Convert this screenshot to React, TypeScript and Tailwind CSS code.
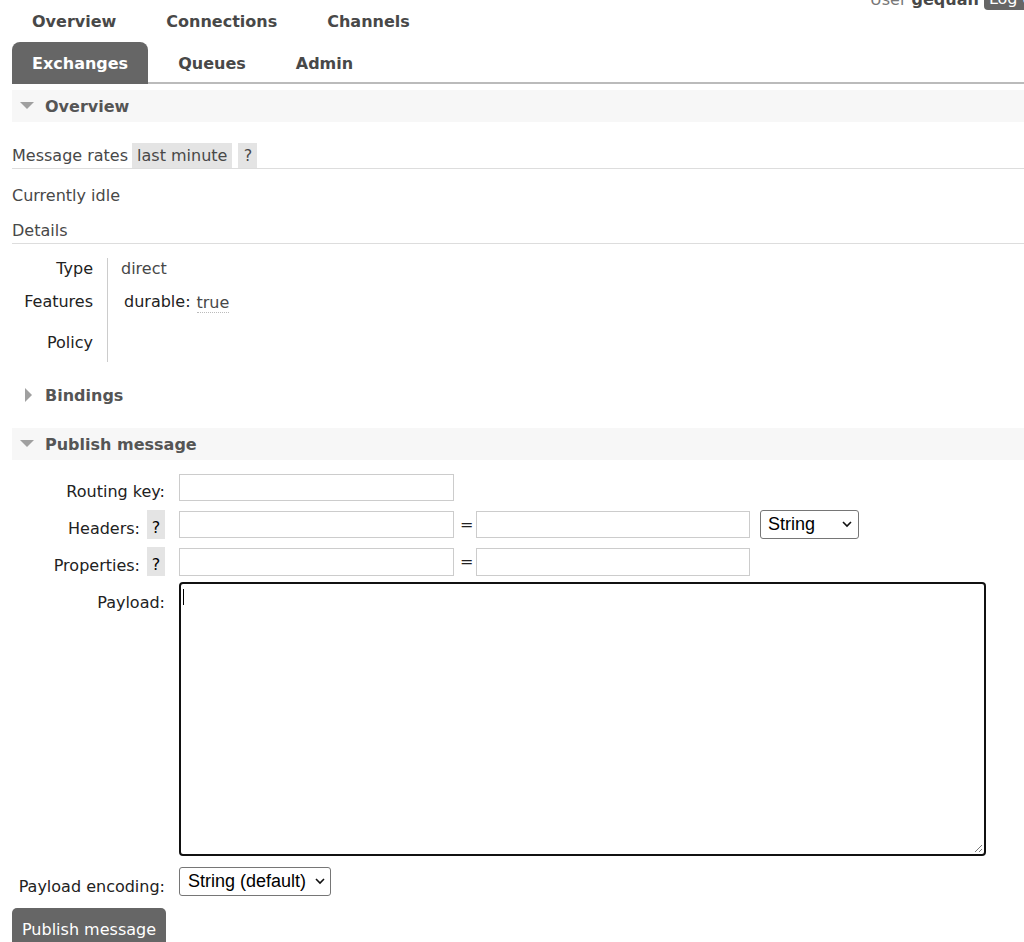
import React from "react";

function DownTri({ ml, mr }: { ml: string; mr: string }) {
  return (
    <svg width="14" height="8" viewBox="0 0 14 8" className={`${ml} ${mr} shrink-0`}>
      <polygon points="0,0 14,0 7,7" fill="#a0a0a0" />
    </svg>
  );
}

function Chevron() {
  return (
    <svg width="10" height="7" viewBox="0 0 10 7" className="shrink-0">
      <polyline points="1,1 5,5 9,1" fill="none" stroke="#111" strokeWidth="1.6" />
    </svg>
  );
}

export default function App() {
  return (
    <div className="relative h-[942px] w-[1024px] overflow-hidden bg-white font-['DejaVu_Sans',sans-serif] text-[16px] leading-[19px] text-[#484848]">
      {/* user info, scrolled partly off the top */}
      <div className="absolute left-[870px] top-[-10px] flex items-start whitespace-nowrap">
        <span className="text-[#777]">User&nbsp;</span>
        <span className="font-bold text-[#484848]">gequan</span>
        <span className="ml-[5px] mt-[-1px] h-[21px] rounded-[4px] bg-[#666] px-[5px] text-white">Log out</span>
      </div>

      {/* nav row 1 */}
      <div className="flex h-[42px] items-center gap-[10px] pl-[12px] font-bold text-[#484848]">
        <span className="px-[20px]">Overview</span>
        <span className="px-[20px]">Connections</span>
        <span className="px-[20px]">Channels</span>
      </div>

      {/* nav row 2 */}
      <div className="ml-[12px] flex h-[42px] items-start gap-[10px] border-b-2 border-[#bbb] font-bold text-[#484848]">
        <span className="flex h-[42px] items-center rounded-t-[8px] bg-[#666] px-[20px] text-white">Exchanges</span>
        <span className="flex h-[42px] items-center px-[20px]">Queues</span>
        <span className="flex h-[42px] items-center px-[20px]">Admin</span>
      </div>

      <div className="pl-[12px]">
        {/* Overview section */}
        <div className="mt-[6px] flex h-[32px] items-center bg-[#f7f7f7] font-bold text-[#555]">
          <DownTri ml="ml-[8px]" mr="mr-[11px]" />
          Overview
        </div>

        <div className="mt-[21px] flex h-[26px] items-start border-b border-[#ddd]">
          <span className="flex h-[25px] items-center">Message rates</span>
          <span className="ml-[4px] flex h-[25px] items-center bg-[#e4e4e4] px-[5px]">last minute</span>
          <span className="ml-[6px] flex h-[25px] w-[19px] items-center justify-center bg-[#e4e4e4]">?</span>
        </div>

        <div className="flex h-[52px] items-center">Currently idle</div>
        <div className="flex h-[23px] items-end border-b border-[#ddd] pb-[3px] leading-[18px]">Details</div>

        {/* facts table */}
        <div className="mt-[14px] flex">
          <div className="w-[96px] border-r border-[#ccc] pr-[14px] text-right text-[#222]">
            <div className="h-[30px] pt-[1px]">Type</div>
            <div className="h-[34px] pt-[4px]">Features</div>
            <div className="h-[40px] pt-[11px]">Policy</div>
          </div>
          <div className="pl-[13px]">
            <div className="h-[30px] pt-[1px]">direct</div>
            <div className="flex h-[34px] items-start pl-[3px] pt-[4px]">
              <span className="text-[#222]">durable:</span>
              <span className="ml-[6px] mt-[2px] border-b border-dotted border-[#bbb] leading-[18px]">true</span>
            </div>
            <div className="h-[40px]" />
          </div>
        </div>

        {/* Bindings */}
        <div className="mt-[17px] flex h-[32px] items-center font-bold text-[#555]">
          <svg width="8" height="14" viewBox="0 0 8 14" className="ml-[13px] mr-[12px] shrink-0">
            <polygon points="0,0 0,14 7,7" fill="#a0a0a0" />
          </svg>
          Bindings
        </div>

        {/* Publish message */}
        <div className="mt-[17px] flex h-[32px] items-center bg-[#f7f7f7] font-bold text-[#555]">
          <DownTri ml="ml-[8px]" mr="mr-[11px]" />
          Publish message
        </div>

        <div className="mt-[14px] flex flex-col text-[#222]">
          <div className="flex items-center">
            <div className="w-[153px] pt-[7px] text-right">Routing key:</div>
            <div className="ml-[14px] h-[27px] w-[275px] border border-[#ccc] bg-white" />
          </div>

          <div className="mt-[9px] flex items-center">
            <div className="flex w-[153px] items-center justify-end gap-[7px]">
              <span className="pt-[7px]">Headers:</span>
              <span className="flex h-[29px] w-[18px] items-center justify-center bg-[#e4e4e4] pt-[5px] text-black">?</span>
            </div>
            <div className="ml-[14px] h-[27px] w-[275px] border border-[#ccc] bg-white" />
            <span className="mx-[6px] w-[10px] text-center">=</span>
            <div className="h-[27px] w-[274px] border border-[#ccc] bg-white" />
            <div className="ml-[10px] flex h-[29px] w-[99px] items-center justify-between rounded-[3px] border border-[#767676] pl-[7px] pr-[6px] font-['Liberation_Sans',Arial,sans-serif] text-[18px] text-black">
              <span>String</span>
              <Chevron />
            </div>
          </div>

          <div className="mt-[8px] flex items-center">
            <div className="flex w-[153px] items-center justify-end gap-[7px]">
              <span className="pt-[7px]">Properties:</span>
              <span className="flex h-[29px] w-[18px] items-center justify-center bg-[#e4e4e4] pt-[5px] text-black">?</span>
            </div>
            <div className="ml-[14px] h-[28px] w-[275px] border border-[#ccc] bg-white" />
            <span className="mx-[6px] w-[10px] text-center">=</span>
            <div className="h-[28px] w-[274px] border border-[#ccc] bg-white" />
          </div>

          <div className="mt-[6px] flex items-start">
            <div className="w-[153px] pt-[11px] text-right">Payload:</div>
            <div className="relative ml-[14px] h-[274px] w-[807px] rounded-[4px] border-2 border-[#111] bg-white">
              <div className="absolute left-[2px] top-[5px] h-[16px] w-px bg-black" />
              <svg width="10" height="10" viewBox="0 0 10 10" className="absolute bottom-[1px] right-[1px]">
                <line x1="9" y1="2" x2="2" y2="9" stroke="#777" strokeWidth="1" />
                <line x1="9" y1="6" x2="6" y2="9" stroke="#777" strokeWidth="1" />
              </svg>
            </div>
          </div>

          <div className="mt-[11px] flex items-center">
            <div className="w-[153px] pt-[9px] text-right">Payload encoding:</div>
            <div className="ml-[14px] flex h-[29px] w-[152px] items-center justify-between rounded-[3px] border border-[#767676] pl-[8px] pr-[5px] font-['Liberation_Sans',Arial,sans-serif] text-[18px] text-black">
              <span>String (default)</span>
              <Chevron />
            </div>
          </div>

          <div className="mt-[12px] flex h-[42px] w-[154px] items-center rounded-[5px] bg-[#666] pl-[10px] text-white">
            Publish message
          </div>
        </div>
      </div>
    </div>
  );
}
